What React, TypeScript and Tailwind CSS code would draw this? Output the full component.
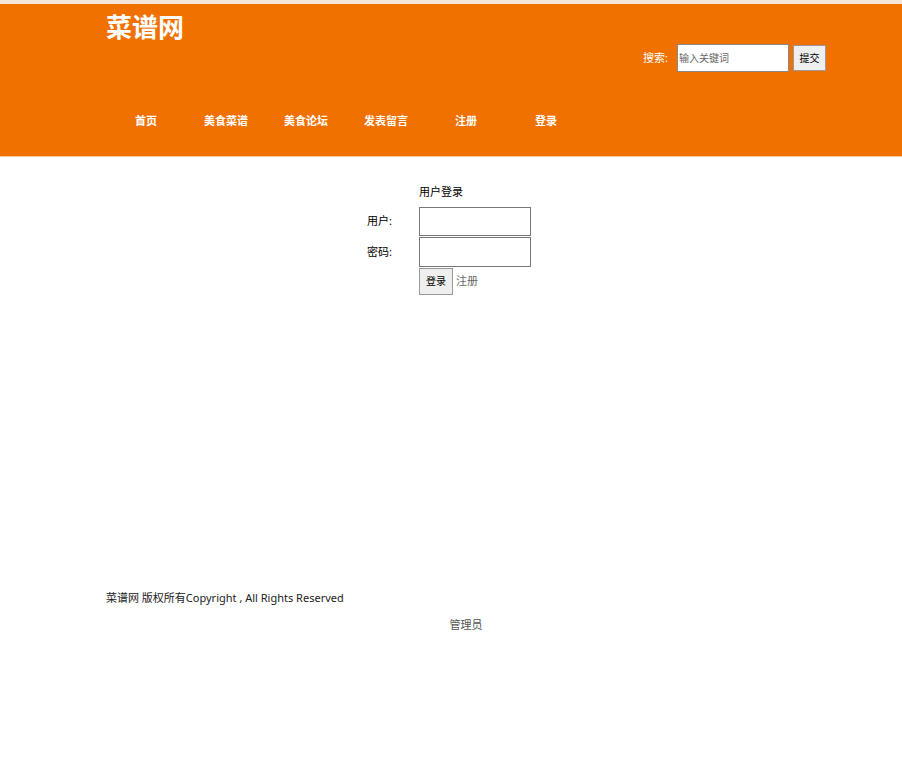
export default function App() {
  const nav = ["首页", "美食菜谱", "美食论坛", "发表留言", "注册", "登录"];
  const font = { fontFamily: '"Noto Sans", "Noto Sans CJK SC", sans-serif' };

  return (
    <div className="min-h-[783px] bg-white text-[11px] text-[#333]" style={font}>
      <div className="h-[4px] bg-[#f3e6d8]" />
      <header className="h-[153px] bg-[#f07000] border-b border-[#f6c79a]">
        <div className="ml-[106px] w-[720px]">
          <h1 className="pt-[6px] h-[40px] text-[26px] font-bold leading-[34px] text-white">菜谱网</h1>
          <div className="flex items-center justify-end h-[28px]">
            <span className="mr-[9px] text-[11px] text-white">搜索:</span>
            <input
              className="h-[28px] w-[112px] border border-[#888] bg-white px-[1px] text-[10px] text-black outline-none placeholder:text-[#666]"
              placeholder="输入关键词"
            />
            <button className="ml-[4px] h-[26px] w-[33px] border border-[#999] bg-[#efefef] text-[10px] text-black">
              提交
            </button>
          </div>
          <nav className="mt-[40px] flex">
            {nav.map((n) => (
              <a key={n} className="w-[80px] text-center text-[11px] font-bold leading-[18px] text-white">
                {n}
              </a>
            ))}
          </nav>
        </div>
      </header>

      <main className="h-[432px] pt-[26px]">
        <div className="ml-[367px] grid grid-cols-[52px_112px] items-center gap-y-[1px]">
          <div />
          <div className="h-[17px] leading-[17px] text-black">用户登录</div>
          <div className="pt-[6px] text-black">用户:</div>
          <input className="mt-[6px] h-[29px] w-[112px] border border-[#777] bg-white outline-none" />
          <div className="text-black">密码:</div>
          <input type="password" className="h-[30px] w-[112px] border border-[#777] bg-white outline-none" />
          <div />
          <div className="flex items-center">
            <button className="h-[27px] w-[34px] border border-[#999] bg-[#efefef] text-[10px] text-black">
              登录
            </button>
            <a className="ml-[3px] text-[#666]">注册</a>
          </div>
        </div>
      </main>

      <footer className="ml-[106px] w-[720px]">
        <p className="leading-[18px] text-[#222]">菜谱网 版权所有Copyright , All Rights Reserved</p>
        <p className="mt-[9px] text-center leading-[18px] text-[#555]">管理员</p>
      </footer>
    </div>
  );
}
